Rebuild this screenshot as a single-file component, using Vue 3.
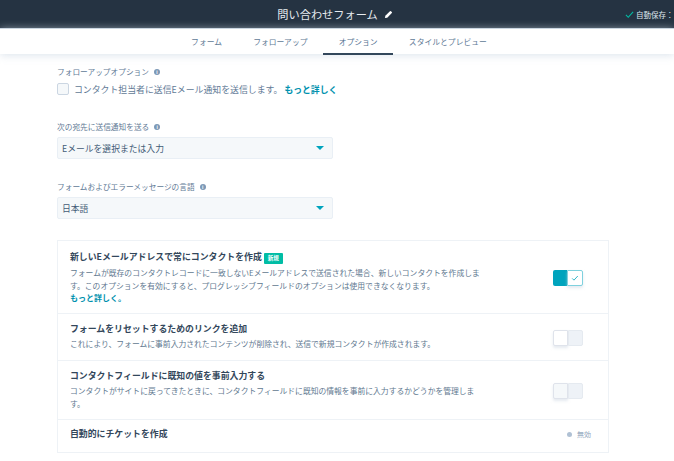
<script setup>
const tabs = [
  { label: 'フォーム', active: false },
  { label: 'フォローアップ', active: false },
  { label: 'オプション', active: true },
  { label: 'スタイルとプレビュー', active: false },
]
</script>

<template>
  <div class="page">
    <header class="topbar">
      <div class="title">
        <span>問い合わせフォーム</span>
        <svg class="pencil" viewBox="0 0 10 10" width="10" height="10">
          <path d="M1 9l.5-2.6L6.6 1.3a.8.8 0 0 1 1.1 0l1 1a.8.8 0 0 1 0 1.1L3.6 8.5z" fill="#fff" />
        </svg>
      </div>
      <div class="autosave">
        <svg viewBox="0 0 10 10" width="9" height="9">
          <path d="M1 5.5l2.6 2.6L9 2" fill="none" stroke="#00bda5" stroke-width="1.2" />
        </svg>
        <span>自動保存：</span>
      </div>
    </header>

    <nav class="tabs">
      <a v-for="t in tabs" :key="t.label" class="tab" :class="{ active: t.active }">{{ t.label }}</a>
    </nav>

    <main class="content">
      <div class="label first">フォローアップオプション <i class="info">i</i></div>
      <label class="check">
        <span class="box"></span>
        <span>コンタクト担当者に送信Eメール通知を送信します。</span>
        <a class="link">もっと詳しく</a>
      </label>

      <div class="label second">次の宛先に送信通知を送る <i class="info">i</i></div>
      <div class="select"><span>Eメールを選択または入力</span><b class="caret"></b></div>

      <div class="label third">フォームおよびエラーメッセージの言語 <i class="info">i</i></div>
      <div class="select"><span>日本語</span><b class="caret"></b></div>

      <section class="card">
        <div class="row r1">
          <div class="text">
            <h3>新しいEメールアドレスで常にコンタクトを作成 <em class="badge">新規</em></h3>
            <p>フォームが既存のコンタクトレコードに一致しないEメールアドレスで送信された場合、新しいコンタクトを作成します。このオプションを有効にすると、プログレッシブフィールドのオプションは使用できなくなります。</p>
            <a class="link small">もっと詳しく。</a>
          </div>
          <div class="toggle on">
            <span class="side fill"></span>
            <span class="side knob">
              <svg viewBox="0 0 10 10" width="8" height="8">
                <path d="M1.5 5.5l2.2 2.2L8.5 2.5" fill="none" stroke="#00a4bd" stroke-width="1" />
              </svg>
            </span>
          </div>
        </div>
        <div class="row r2">
          <div class="text">
            <h3>フォームをリセットするためのリンクを追加</h3>
            <p>これにより、フォームに事前入力されたコンテンツが削除され、送信で新規コンタクトが作成されます。</p>
          </div>
          <div class="toggle">
            <span class="side knob white"></span>
            <span class="side grey"></span>
          </div>
        </div>
        <div class="row r3">
          <div class="text">
            <h3>コンタクトフィールドに既知の値を事前入力する</h3>
            <p>コンタクトがサイトに戻ってきたときに、コンタクトフィールドに既知の情報を事前に入力するかどうかを管理します。</p>
          </div>
          <div class="toggle">
            <span class="side knob pale"></span>
            <span class="side grey"></span>
          </div>
        </div>
        <div class="row r4">
          <h3>自動的にチケットを作成</h3>
          <div class="status"><i class="dot"></i>無効</div>
        </div>
      </section>
    </main>
  </div>
</template>

<style scoped>
.page {
  width: 674px;
  height: 461px;
  overflow: hidden;
  background: #fff;
  font-family: "Noto Sans CJK JP", "Noto Sans", sans-serif;
  color: #33475b;
}
.topbar {
  height: 28px;
  background: #253342;
  color: #fff;
  position: relative;
  display: flex;
  align-items: center;
  justify-content: center;
}
.title {
  font-size: 11.2px;
  display: flex;
  align-items: center;
  gap: 6px;
  margin-left: -4px;
  color: #e6ebf0;
}
.pencil { display: block; width: 9px; height: 9px; }
.autosave {
  position: absolute;
  left: 625px;
  top: 0;
  height: 28px;
  display: flex;
  align-items: center;
  gap: 2px;
  font-size: 7.5px;
  white-space: nowrap;
  color: #dfe6ed;
}
.tabs {
  height: 26px;
  box-sizing: border-box;
  border-top: 1px solid #cbd6e2;
  display: flex;
  padding-left: 175.5px;
  background: #fff;
  box-shadow: 0 1px 8px rgba(203, 214, 226, .7);
  position: relative;
}
.tab {
  font-size: 7.8px;
  line-height: 25px;
  padding: 0 15.6px;
  color: #5f7a96;
  white-space: nowrap;
  height: 26px;
  box-sizing: border-box;
}
.tab.active { border-bottom: 2px solid #33475b; color: #516f90; }
.content { padding: 0 65px 0 57px; font-size: 8px; }
.label {
  font-size: 7.7px;
  line-height: 12px;
  color: #5f7a96;
  white-space: nowrap;
  display: flex;
  align-items: center;
  gap: 5px;
}
.first { padding-top: 12px; }
.second { margin-top: 25px; }
.third { margin-top: 22px; }
.info {
  width: 6px;
  height: 6px;
  border-radius: 50%;
  background: #7c98b6;
  color: #fff;
  font: normal 700 5px/6px "Liberation Sans", sans-serif;
  text-align: center;
}
.check {
  display: flex;
  align-items: center;
  height: 14px;
  margin-top: 4px;
  font-size: 8.9px;
  color: #5f7a96;
  white-space: nowrap;
}
.box {
  width: 10px;
  height: 10px;
  border: 1px solid #cbd6e2;
  border-radius: 2px;
  background: #f5f8fa;
  margin-right: 5px;
}
.link { color: #0091ae; font-weight: 700; }
.check .link { font-size: 8.8px; margin-left: 2px; }
.small { font-size: 8px; line-height: 13px; display: block; margin-top: -1px; }
.select {
  width: 276px;
  height: 22px;
  box-sizing: border-box;
  margin-top: 4px;
  padding: 0 8px 0 4px;
  background: #f5f8fa;
  border: 1px solid #e9eff5;
  border-radius: 2px;
  display: flex;
  align-items: center;
  justify-content: space-between;
  font-size: 8.8px;
  color: #425b76;
}
.caret {
  width: 0;
  height: 0;
  border-left: 4px solid transparent;
  border-right: 4px solid transparent;
  border-top: 4px solid #00a4bd;
}
.card {
  margin-top: 21px;
  width: 552px;
  box-sizing: border-box;
  border: 1px solid #eef2f6;
}
.row {
  display: flex;
  justify-content: space-between;
  align-items: center;
  padding: 0 25px 0 12px;
  box-sizing: border-box;
}
.row + .row { border-top: 1px solid #eef2f6; }
.r1 { height: 72px; }
.r2 { height: 47px; }
.r3 { height: 59px; }
.r4 { height: 33px; align-items: flex-start; padding-top: 7px; }
.r2 .text, .r3 .text { margin-top: -2px; }
.toggle { margin-top: 2px; }
.text { width: 412px; }
h3 {
  margin: 0;
  font-size: 8.9px;
  line-height: 13px;
  font-weight: 700;
  color: #33475b;
  white-space: nowrap;
}
p {
  margin: 2px 0 0;
  font-size: 7.8px;
  line-height: 13px;
  color: #61788f;
}
.badge {
  display: inline-block;
  font: normal 700 5.5px/11px "Noto Sans CJK JP", sans-serif;
  padding: 0 4px;
  background: #00bda5;
  color: #fff;
  border-radius: 1px;
  vertical-align: 0;
}
.toggle { display: flex; width: 30px; height: 16px; flex: none; }
.side { flex: 1; box-sizing: border-box; display: flex; align-items: center; justify-content: center; }
.fill { background: #00a4bd; border-radius: 2px 0 0 2px; }
.knob { background: #fff; border: 1px solid #7fd1de; border-radius: 0 2px 2px 0; box-shadow: 0 2px 3px rgba(203,214,226,.5); }
.knob.white { border-color: #dfe3eb; border-radius: 2px 0 0 2px; }
.knob.pale { background: #f5f8fa; border-color: #dfe3eb; border-radius: 2px 0 0 2px; }
.grey { background: #eef2f7; border: 1px solid #e5eaf0; border-radius: 0 2px 2px 0; }
.status { font-size: 7px; line-height: 11px; color: #8fa5bb; display: flex; align-items: center; gap: 5px; margin-top: 2px; margin-right: -8px; }
.dot { width: 5px; height: 5px; border-radius: 50%; background: #b0c1d4; }
</style>
